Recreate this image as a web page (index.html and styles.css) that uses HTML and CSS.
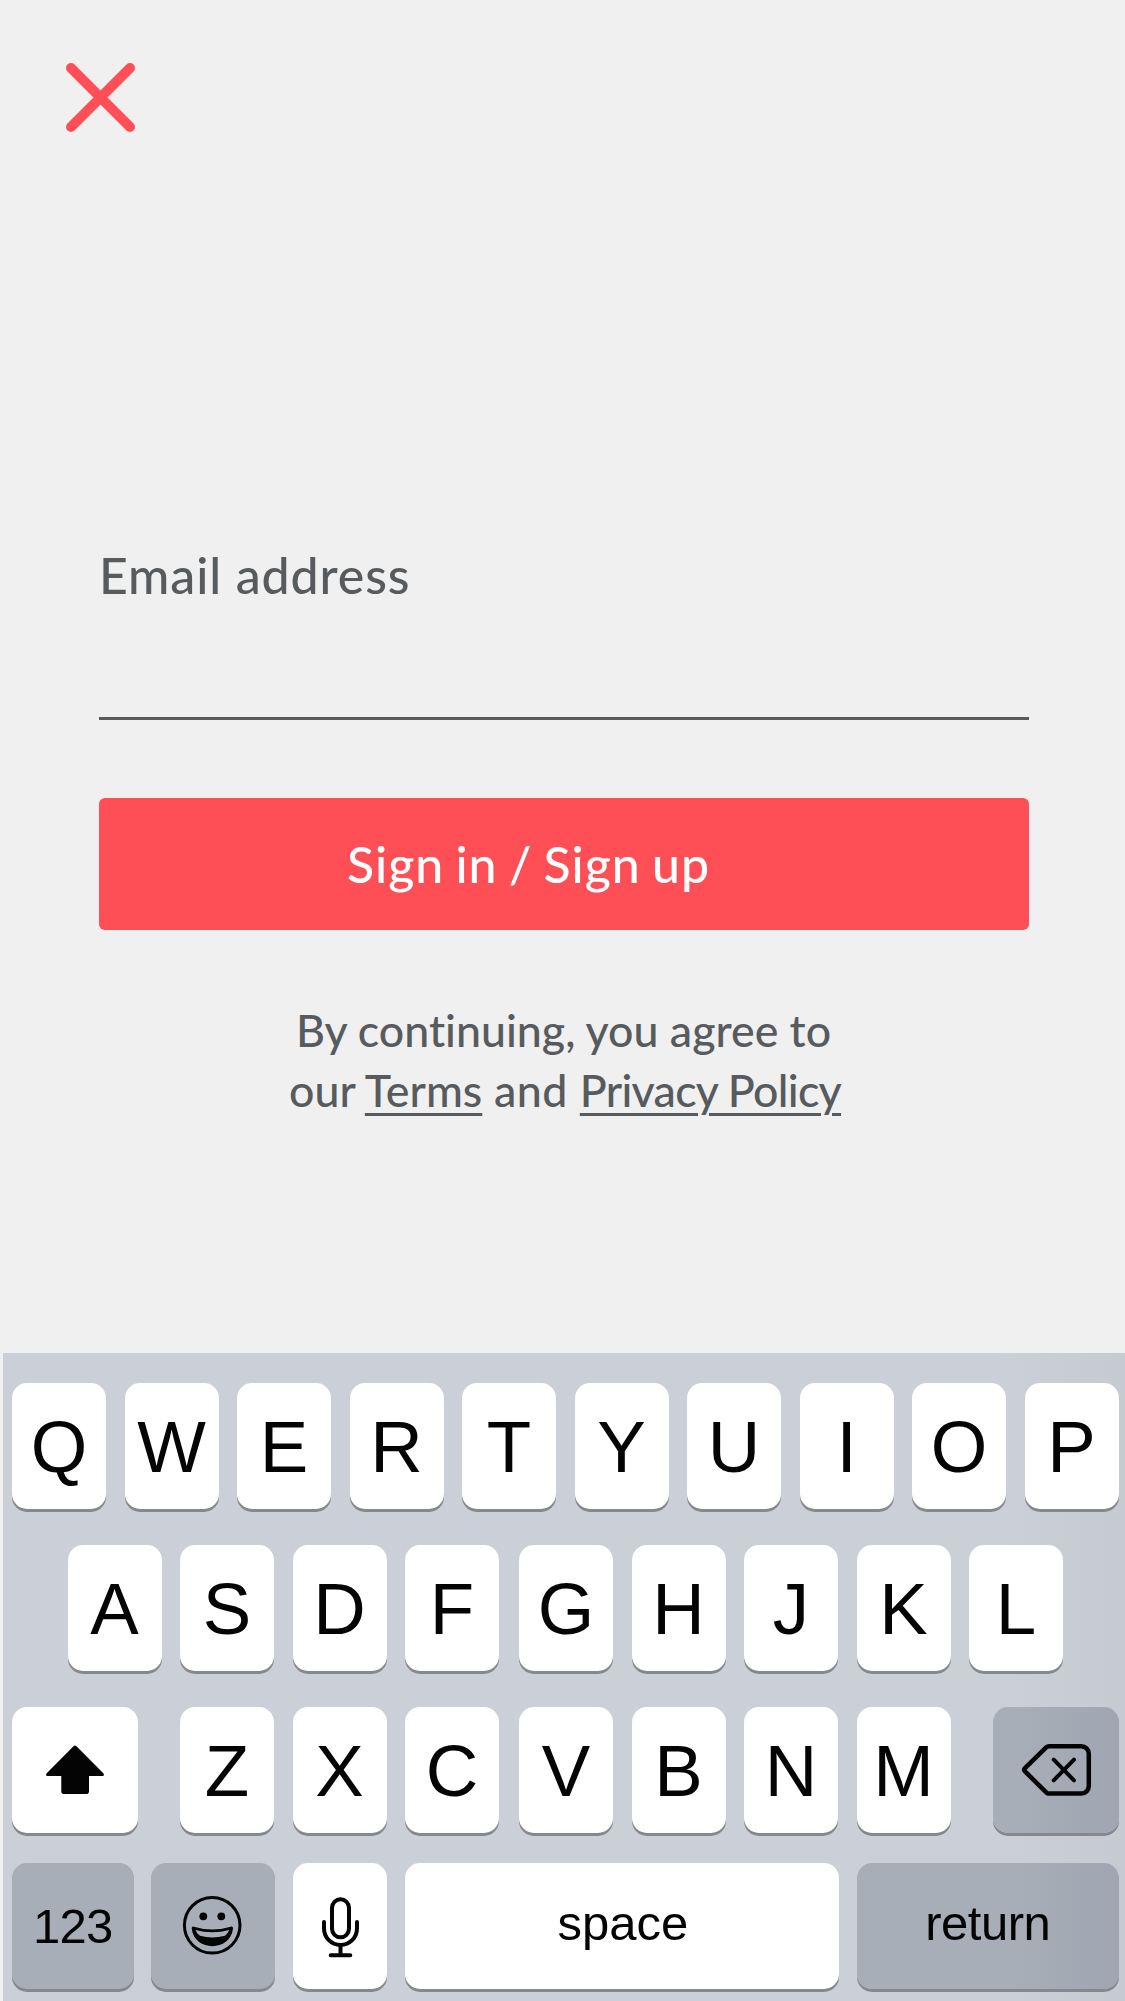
FILE: index.html
```html
<!DOCTYPE html>
<html lang="en">
<head>
<meta charset="utf-8">
<title>Sign in</title>
<link rel="stylesheet" href="styles.css">
</head>
<body>
<main class="screen">
  <header class="topbar">
    <svg class="close" viewBox="0 0 69 69" role="img" aria-label="Close"><path d="M5 5L64 64M64 5L5 64"/></svg>
  </header>
  <form class="form">
    <div class="field"><span class="label">Email address</span></div>
    <div class="submit"><span class="submit-text">Sign in / Sign up</span></div>
    <p class="legal"><span class="line line-first">By continuing, you agree to</span><span class="line line-second">our <a class="link">Terms</a><span class="joiner"> and </span><a class="link policy">Privacy Policy</a></span></p>
  </form>
  <section class="keyboard">
    <div class="row">
      <div class="key">Q</div><div class="key">W</div><div class="key">E</div><div class="key">R</div><div class="key">T</div><div class="key">Y</div><div class="key">U</div><div class="key">I</div><div class="key">O</div><div class="key">P</div>
    </div>
    <div class="row row-home">
      <div class="key">A</div><div class="key">S</div><div class="key">D</div><div class="key">F</div><div class="key middle">G</div><div class="key">H</div><div class="key">J</div><div class="key">K</div><div class="key">L</div>
    </div>
    <div class="row row-lower">
      <div class="key wide"><svg class="icon" viewBox="0 0 126 126"><path class="solid" d="M61.5 39.2Q63 37.8 64.5 39.2L91.3 66.3Q93 69 90.3 69H77V84.2Q77 87 74.2 87H52.1Q49.3 87 49.3 84.2V69H35.7Q33 69 34.7 66.3Z"/></svg></div>
      <div class="letters">
        <div class="key">Z</div><div class="key">X</div><div class="key">C</div><div class="key middle">V</div><div class="key">B</div><div class="key">N</div><div class="key">M</div>
      </div>
      <div class="key wide dark"><svg class="icon" viewBox="0 0 126 126"><path class="stroke thick" d="M56 39.2H88.3A7.5 7.5 0 0 1 95.8 46.7V79A7.5 7.5 0 0 1 88.3 86.5H56Q54.4 86.5 53.2 85.3L32 64.4Q30.4 62.8 32 61.2L53.2 40.4Q54.4 39.2 56 39.2Z"/><path class="stroke" d="M60.7 52.7L81 73.3M81 52.7L60.7 73.3"/></svg></div>
    </div>
    <div class="row row-bottom">
      <div class="key dark small numbers">123</div>
      <div class="key dark emoji"><svg class="icon" viewBox="0 0 124 126"><circle class="stroke thin" cx="61.2" cy="62.3" r="27.8"/><circle class="solid" cx="52.3" cy="53.3" r="3.9"/><circle class="solid" cx="70.3" cy="53.3" r="3.9"/><path class="solid" fill-rule="evenodd" d="M40.7 65.5Q40.5 63 43 63.7Q61.2 69.5 79.6 63.7Q82.1 63 82 65.5C79.5 89 43.2 89 40.7 65.5ZM44.5 67Q45.5 70.5 49 72.7Q61.2 76.2 74 72.7Q77 70.5 78.3 67Q61.2 71.5 44.5 67Z"/></svg></div>
      <div class="key"><svg class="icon" viewBox="0 0 94 126"><rect class="stroke" x="39" y="36.3" width="17" height="38" rx="8.5"/><path class="stroke" d="M31 59V65.5A16.5 16.5 0 0 0 64 65.5V59M47.5 83V92M37.7 92.3H57.3"/></svg></div>
      <div class="key small space">space</div>
      <div class="key dark small return">return</div>
    </div>
  </section>
</main>
</body>
</html>
```
FILE: styles.css
```css
* { box-sizing: border-box; }

body {
  margin: 0;
  background: #f0f0f0;
}

.screen {
  display: flex;
  flex-direction: column;
  width: 1125px;
  height: 2001px;
  overflow: hidden;
}

.topbar {
  height: 545px;
  padding: 63px 0 0 66px;
}

.close {
  display: block;
  width: 69px;
  height: 69px;
  fill: none;
  stroke: #ff4f56;
  stroke-width: 10;
  stroke-linecap: round;
}

.form {
  flex: 1;
  padding: 0 96px 0 99px;
  font-family: Lato, sans-serif;
  font-weight: 500;
  font-variant-ligatures: none;
  color: #575b5e;
}

.field {
  height: 175px;
  border-bottom: 3px solid #5a5b5d;
  font-size: 50px;
  line-height: 60px;
  letter-spacing: 0.9px;
  white-space: nowrap;
}

.submit {
  height: 132px;
  margin-top: 78px;
  padding: 36px 0 0 248px;
  border-radius: 6px;
  background: #ff4f56;
  color: #fff;
  font-size: 50px;
  line-height: 60px;
  letter-spacing: 1px;
  word-spacing: -2.5px;
  white-space: nowrap;
}

.legal {
  margin: 70px 0 0;
  font-size: 44.7px;
  line-height: 60px;
  white-space: nowrap;
}

.line { display: block; }
.line-first { padding-left: 197px; }
.line-second { padding-left: 190px; }

.link {
  text-decoration: underline;
  text-decoration-thickness: 3px;
  text-underline-offset: 6px;
}

.joiner { letter-spacing: 0.5px; }
.policy { letter-spacing: -0.7px; }

.keyboard {
  height: 648px;
  margin-left: 3px;
  padding: 30px 6px 0 9px;
  background: linear-gradient(90deg, #cbcfd7 0, #cbcfd7 1000px, #c6cbd2 1122px);
  font-family: "Liberation Sans", Arial, sans-serif;
  color: #040404;
}

.row {
  display: flex;
  gap: 18.5px;
  height: 126px;
  margin-bottom: 36px;
}

.row-home { padding-left: 55.5px; }

.row-lower {
  gap: 42px;
  margin-bottom: 30px;
}

.row-bottom {
  gap: 0;
  justify-content: space-between;
  margin-bottom: 0;
}

.letters {
  display: flex;
  gap: 18.5px;
  width: 771px;
}

.key {
  flex: none;
  width: 94px;
  height: 126px;
  border-radius: 15px;
  background: #fff;
  box-shadow: 0 3px 0 #85888c;
  font-size: 72.7px;
  line-height: 128px;
  text-align: center;
}

.middle { margin-left: 1.5px; }
.wide { width: 126px; }
.dark { background: #a7aeb8; }
.wide.dark { background: linear-gradient(90deg, #a7aeb8 20%, #9fa6b1); }
.small { font-size: 49px; }

.numbers {
  width: 121.5px;
  line-height: 126px;
  letter-spacing: -0.8px;
}

.emoji { width: 124px; }

.space {
  width: 433.5px;
  padding-left: 2px;
  line-height: 120px;
}

.return {
  width: 262.5px;
  background: linear-gradient(90deg, #a7aeb8 60%, #9fa6b1);
  line-height: 120px;
  letter-spacing: -0.5px;
}

.icon {
  display: block;
  width: 100%;
  height: 126px;
}

.solid { fill: #040404; }

.stroke {
  fill: none;
  stroke: #040404;
  stroke-width: 4;
  stroke-linecap: round;
  stroke-linejoin: round;
}

.thick { stroke-width: 4.5; }
.thin { stroke-width: 3; }
```
